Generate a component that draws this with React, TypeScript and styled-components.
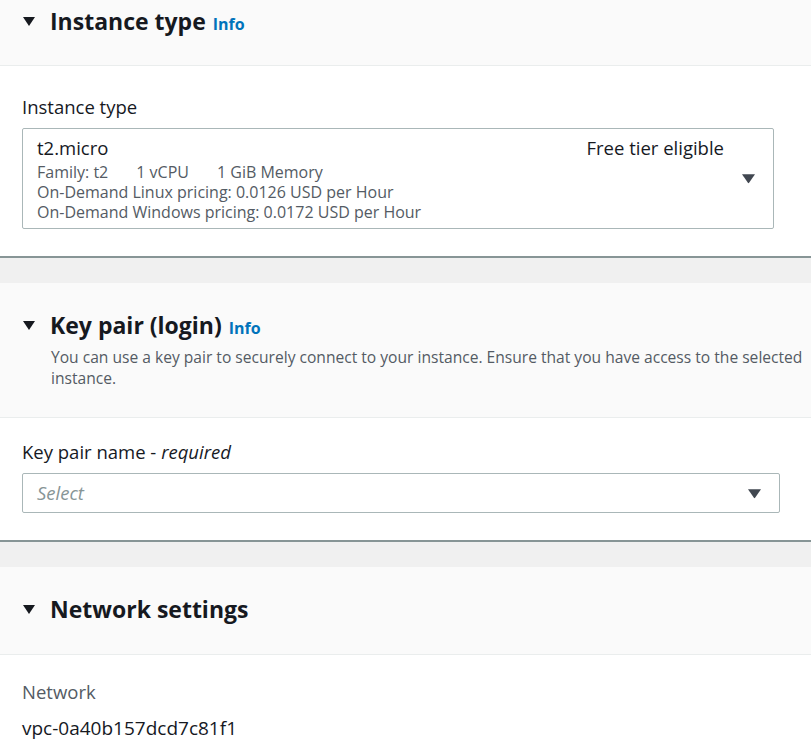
import React from "react";
import styled, { createGlobalStyle } from "styled-components";

const Global = createGlobalStyle`
  html, body { margin: 0; padding: 0; }
  body {
    background: #f0f0f0;
    font-family: "Open Sans", "Noto Sans", Arial, sans-serif;
    color: #16191f;
    overflow: hidden;
  }
`;

const Page = styled.div`
  width: 811px;
  background: #f0f0f0;
`;

const Section = styled.section<{ $gap?: boolean }>`
  background: #ffffff;
  border-bottom: 2px solid #879596;
  margin-bottom: ${(p) => (p.$gap ? "25px" : "0")};
`;

const Header = styled.div<{ $top: number; $bottom: number }>`
  background: #fafafa;
  border-bottom: 1px solid #eaeded;
  padding: ${(p) => p.$top}px 0 ${(p) => p.$bottom}px 23px;
`;

const TitleRow = styled.div`
  display: flex;
  align-items: center;
  gap: 15px;
`;

const Caret = styled.span`
  display: inline-block;
  width: 0;
  height: 0;
  border-left: 6.5px solid transparent;
  border-right: 6.5px solid transparent;
  border-top: 9px solid #16191f;
`;

const Title = styled.h2`
  margin: 0;
  font-size: 23px;
  line-height: 30px;
  font-weight: 700;
  color: #16191f;
`;

const Info = styled.a`
  margin-left: 7px;
  font-size: 16px;
  line-height: 1;
  font-weight: 700;
  color: #0073bb;
  text-decoration: none;
`;

const Description = styled.p`
  margin: 7px 0 0 28px;
  font-size: 15.6px;
  line-height: 21px;
  color: #545b64;
`;

const Content = styled.div<{ $top: number; $bottom: number }>`
  padding: ${(p) => p.$top}px 20px ${(p) => p.$bottom}px 22px;
`;

const Label = styled.div<{ $muted?: boolean }>`
  font-size: 18.5px;
  line-height: 22px;
  color: ${(p) => (p.$muted ? "#545b64" : "#16191f")};
  margin-bottom: 10px;

  em { font-style: italic; }
`;

const SelectBox = styled.div<{ $width: number }>`
  box-sizing: border-box;
  width: ${(p) => p.$width}px;
  border: 1px solid #aab7b8;
  border-radius: 2px;
  background: #fff;
  display: flex;
  align-items: stretch;
`;

const OptionBody = styled.div`
  flex: 1;
  padding: 6px 0 6px 14px;
`;

const OptionName = styled.div`
  font-size: 18.5px;
  line-height: 26px;
  color: #16191f;
  margin-bottom: 1px;
`;

const OptionLine = styled.div`
  font-size: 16px;
  line-height: 20px;
  color: #545b64;
  white-space: nowrap;
`;

const SpecRow = styled(OptionLine)`
  display: flex;
  gap: 28px;
`;

const Tag = styled.div`
  font-size: 18.5px;
  line-height: 26px;
  padding-top: 6px;
  color: #16191f;
`;

const Placeholder = styled.div`
  flex: 1;
  padding: 8px 0 8px 14px;
  font-size: 18.5px;
  line-height: 22px;
  font-style: italic;
  color: #879596;
`;

const CaretCell = styled.div<{ $left: number; $right: number }>`
  display: flex;
  align-items: center;
  padding: 0 ${(p) => p.$right}px 0 ${(p) => p.$left}px;
`;

const SelectCaret = () => (
  <svg width="15" height="11" viewBox="0 0 15 11">
    <path d="M1 1.2 L14 1.2 L8.1 9.8 Q7.5 10.6 6.9 9.8 Z" fill="#414750" />
  </svg>
);

const Value = styled.div`
  font-size: 19px;
  line-height: 22px;
  color: #16191f;
  margin-top: 14px;
`;

export default function App() {
  return (
    <Page>
      <Global />
      <Section $gap>
        <Header $top={6} $bottom={29}>
          <TitleRow>
            <Caret />
            <Title>
              Instance type<Info href="#">Info</Info>
            </Title>
          </TitleRow>
        </Header>
        <Content $top={30} $bottom={27}>
          <Label>Instance type</Label>
          <SelectBox $width={752}>
            <OptionBody>
              <OptionName>t2.micro</OptionName>
              <SpecRow>
                <span>Family: t2</span>
                <span>1 vCPU</span>
                <span>1 GiB Memory</span>
              </SpecRow>
              <OptionLine>On-Demand Linux pricing: 0.0126 USD per Hour</OptionLine>
              <OptionLine>On-Demand Windows pricing: 0.0172 USD per Hour</OptionLine>
            </OptionBody>
            <Tag>Free tier eligible</Tag>
            <CaretCell $left={17} $right={17}>
              <SelectCaret />
            </CaretCell>
          </SelectBox>
        </Content>
      </Section>

      <Section $gap>
        <Header $top={27} $bottom={28}>
          <TitleRow>
            <Caret />
            <Title>
              Key pair (login)<Info href="#">Info</Info>
            </Title>
          </TitleRow>
          <Description>
            You can use a key pair to securely connect to your instance. Ensure that you have access to the selected
            instance.
          </Description>
        </Header>
        <Content $top={23} $bottom={27}>
          <Label>
            Key pair name - <em>required</em>
          </Label>
          <SelectBox $width={758}>
            <Placeholder>Select</Placeholder>
            <CaretCell $left={10} $right={17}>
              <SelectCaret />
            </CaretCell>
          </SelectBox>
        </Content>
      </Section>

      <Section>
        <Header $top={27} $bottom={30}>
          <TitleRow>
            <Caret />
            <Title>Network settings</Title>
          </TitleRow>
        </Header>
        <Content $top={26} $bottom={20}>
          <Label $muted>Network</Label>
          <Value>vpc-0a40b157dcd7c81f1</Value>
        </Content>
      </Section>
    </Page>
  );
}
